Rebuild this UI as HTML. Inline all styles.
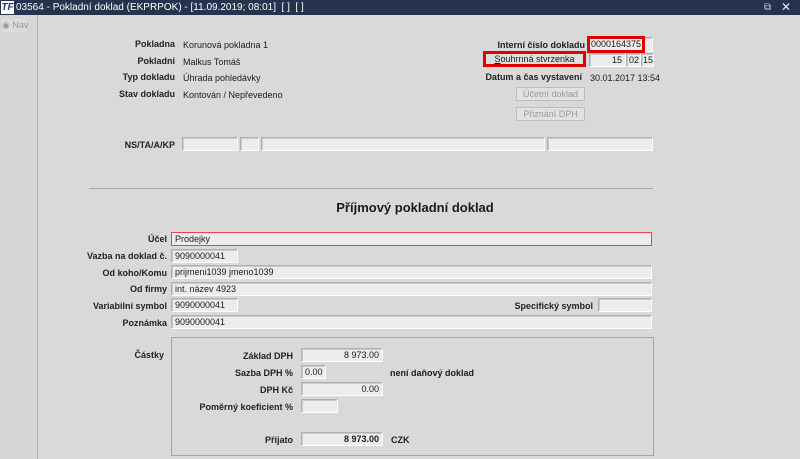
<!DOCTYPE html>
<html><head><meta charset="utf-8"><style>
*{margin:0;padding:0;box-sizing:border-box}
body{width:800px;height:459px;overflow:hidden;background:#d9d9d9;font-family:"Liberation Sans",sans-serif;font-size:9px;color:#1a1a1a;position:relative}
.a{position:absolute;white-space:nowrap}
.l{position:absolute;font-weight:bold;text-align:right;white-space:nowrap;color:#222}
.f{position:absolute;background:#ececec;border:1px solid #a9b0bb;border-bottom-color:#fff;border-right-color:#fff;box-shadow:inset 1px 1px 0 #c8ccd2;padding:2px 3px;font-size:9px;line-height:9px;white-space:nowrap;overflow:hidden}
.r{text-align:right}
.btn{position:absolute;border:1px solid #bdbdbd;background:#e2e2e2;color:#999;text-align:center;font-size:9px;line-height:12px}
</style></head><body>
<div class="a" style="left:0;top:0;width:800px;height:15px;background:#25334e"></div>
<div class="a" style="left:1px;top:1px;width:13px;height:13px;background:#fff;color:#1a3a9a;font-weight:bold;font-style:italic;font-size:10px;line-height:13px;text-align:center">TF</div>
<div class="a" style="left:16px;top:1px;color:#fff;font-size:10px;line-height:13px">03564 - Pokladní doklad (EKPRPOK) - [11.09.2019; 08:01]&nbsp; [ ]&nbsp; [ ]</div>
<div class="a" style="left:764px;top:0;color:#ccd;font-size:10px;line-height:15px">⧉</div>
<div class="a" style="left:781px;top:0;color:#eee;font-size:12px;line-height:15px">✕</div>
<div class="a" style="left:0;top:15px;width:38px;height:444px;background:#d6d6d6;border-right:1px solid #a8b2c4"></div>
<div class="a" style="left:2px;top:19px;width:24px;height:13px;background:#ddd;color:#999;font-size:9px;line-height:13px">◉ Nav</div>

<div class="l" style="right:625px;top:39px">Pokladna</div><div class="a" style="left:183px;top:40px">Korunová pokladna 1</div>
<div class="l" style="right:625px;top:56px">Pokladni</div><div class="a" style="left:183px;top:57px">Malkus Tomáš</div>
<div class="l" style="right:625px;top:72px">Typ dokladu</div><div class="a" style="left:183px;top:73px">Úhrada pohledávky</div>
<div class="l" style="right:625px;top:89px">Stav dokladu</div><div class="a" style="left:183px;top:90px">Kontován / Nepřevedeno</div>

<div class="l" style="right:215px;top:40px">Interní číslo dokladu</div>
<div class="f" style="left:588px;top:37px;width:65px;height:15px"></div>
<div class="a" style="left:587px;top:36px;width:58px;height:17px;border:3px solid #e00000;padding-left:1px;font-size:9px;line-height:11px">0000164375</div>
<div class="a" style="left:483px;top:51px;width:103px;height:16px;border:3px solid #e00000;background:#dedede;text-align:center;line-height:10px"><u>S</u>ouhrnná stvrzenka</div>
<div class="f r" style="left:589px;top:53px;width:37px;height:14px">15</div>
<div class="f r" style="left:626px;top:53px;width:15px;height:14px;padding:2px 1px">02</div>
<div class="f r" style="left:641px;top:53px;width:13px;height:14px;padding:2px 1px">15</div>
<div class="l" style="right:218px;top:72px">Datum a čas vystavení</div>
<div class="a" style="left:590px;top:73px">30.01.2017 13:54</div>
<div class="btn" style="left:516px;top:87px;width:69px;height:14px">Účetní doklad</div>
<div class="btn" style="left:516px;top:107px;width:69px;height:14px">Přiznání DPH</div>

<div class="l" style="right:625px;top:140px">NS/TA/A/KP</div>
<div class="f" style="left:182px;top:137px;width:56px;height:14px"></div>
<div class="f" style="left:240px;top:137px;width:19px;height:14px"></div>
<div class="f" style="left:261px;top:137px;width:284px;height:14px"></div>
<div class="f" style="left:547px;top:137px;width:106px;height:14px"></div>

<div class="a" style="left:89px;top:188px;width:564px;height:1px;background:#a8a8a8"></div>
<div class="a" style="left:0;width:830px;top:200px;text-align:center;font-weight:bold;font-size:13px">Příjmový pokladní doklad</div>

<div class="l" style="right:633px;top:234px">Účel</div>
<div class="f" style="left:171px;top:232px;width:481px;height:14px;border:1px solid #e04848;box-shadow:none">Prodejky</div>
<div class="l" style="right:633px;top:251px">Vazba na doklad č.</div>
<div class="f" style="left:171px;top:249px;width:67px;height:14px">9090000041</div>
<div class="l" style="right:633px;top:268px">Od koho/Komu</div>
<div class="f" style="left:171px;top:265px;width:481px;height:14px">prijmeni1039 jmeno1039</div>
<div class="l" style="right:633px;top:284px">Od firmy</div>
<div class="f" style="left:171px;top:282px;width:481px;height:14px">int. název 4923</div>
<div class="l" style="right:633px;top:301px">Variabilní symbol</div>
<div class="f" style="left:171px;top:298px;width:67px;height:14px">9090000041</div>
<div class="l" style="right:207px;top:301px">Specifický symbol</div>
<div class="f" style="left:598px;top:298px;width:54px;height:14px"></div>
<div class="l" style="right:633px;top:318px">Poznámka</div>
<div class="f" style="left:171px;top:315px;width:481px;height:14px">9090000041</div>

<div class="a" style="left:171px;top:337px;width:483px;height:119px;border:1px solid #a4a4a4"></div>
<div class="l" style="right:636px;top:350px">Částky</div>
<div class="l" style="right:507px;top:351px">Základ DPH</div>
<div class="f r" style="left:301px;top:348px;width:82px;height:14px">8 973.00</div>
<div class="l" style="right:507px;top:368px">Sazba DPH %</div>
<div class="f" style="left:301px;top:365px;width:25px;height:14px">0.00</div>
<div class="a" style="left:390px;top:368px;font-weight:bold">není daňový doklad</div>
<div class="l" style="right:507px;top:385px">DPH Kč</div>
<div class="f r" style="left:301px;top:382px;width:82px;height:14px">0.00</div>
<div class="l" style="right:507px;top:402px">Poměrný koeficient %</div>
<div class="f" style="left:301px;top:399px;width:37px;height:14px"></div>
<div class="l" style="right:507px;top:435px">Přijato</div>
<div class="f r" style="left:301px;top:432px;width:82px;height:14px;font-weight:bold">8 973.00</div>
<div class="a" style="left:391px;top:435px;font-weight:bold">CZK</div>
</body></html>
